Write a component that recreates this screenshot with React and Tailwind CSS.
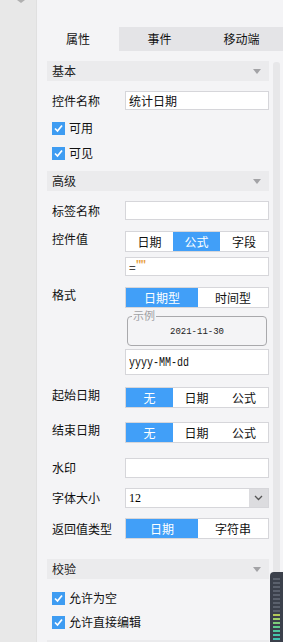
import React from "react";

const F = { fontFamily: '"Noto Sans CJK SC", "Noto Sans", sans-serif' };

function Header({ title, className = "" }) {
  return (
    <div className={"h-[20px] bg-[#ebebed] flex items-center justify-between pl-[5px] pr-[8px] text-[12px] text-[#222] " + className}>
      <span>{title}</span>
      <span className="w-0 h-0 border-l-[4px] border-r-[4px] border-t-[5px] border-l-transparent border-r-transparent border-t-[#a3a3a6]" />
    </div>
  );
}

function Check({ label, className = "" }) {
  return (
    <div className={"flex items-center h-[16px] pl-[5px] text-[12px] text-[#111] " + className}>
      <span className="w-[13px] h-[13px] bg-[#3e9cf2] flex items-center justify-center mr-[4px]">
        <svg width="11" height="11" viewBox="0 0 11 11"><path d="M2 5.5 L4.5 8 L9 2.5" stroke="#fff" strokeWidth="1.7" fill="none" /></svg>
      </span>
      <span>{label}</span>
    </div>
  );
}

function Row({ label, children, className = "", align = "items-center" }) {
  return (
    <div className={"flex " + align + " " + className}>
      <div className="w-[78px] pl-[5px] text-[12px] text-[#111] shrink-0 leading-[16px]">{label}</div>
      <div className="flex-1">{children}</div>
    </div>
  );
}

function Input({ h = "h-[19px]", children, className = "" }) {
  return <div className={"bg-white border border-[#d6d6da] flex items-center px-[3px] text-[12px] text-[#111] " + h + " " + className}>{children}</div>;
}

function Seg({ items, active, widths }) {
  return (
    <div className="flex h-[21px] border border-[#d6d6da] bg-white text-[12px]">
      {items.map((it, i) => (
        <div
          key={it}
          className={"flex items-center justify-center " + (i === active ? "bg-[#419ff8] text-white" : "bg-white text-[#111]")}
          style={{ width: widths[i] }}
        >
          {it}
        </div>
      ))}
    </div>
  );
}

export default function App() {
  return (
    <div className="w-[283px] h-[642px] flex overflow-hidden bg-[#f4f4f6]" style={F}>
      <div className="w-[37px] shrink-0 bg-[#e8e8e8] border-r border-[#e0e0e0] relative">
        <span className="absolute left-[17px] top-0 w-0 h-0 border-l-[4px] border-r-[4px] border-t-[3px] border-l-transparent border-r-transparent border-t-[#b0b0b0]" />
      </div>
      <div className="flex-1 flex flex-col relative">
        <div className="h-[27px] shrink-0" />
        <div className="h-[24px] flex bg-[#e4e4e7] text-[12px] text-[#111] shrink-0">
          <div className="w-[82px] bg-[#f4f4f6] flex items-center justify-center">属性</div>
          <div className="w-[81px] flex items-center justify-center">事件</div>
          <div className="flex-1 flex items-center justify-center">移动端</div>
        </div>
        <div className="flex">
          <div className="ml-[10px] w-[222px] flex flex-col">
            <Header title="基本" className="mt-[10px]" />
            <Row label="控件名称" className="mt-[10px]">
              <Input>统计日期</Input>
            </Row>
            <Check label="可用" className="mt-[10px]" />
            <Check label="可见" className="mt-[9px]" />
            <Header title="高级" className="mt-[10px]" />
            <Row label="标签名称" className="mt-[10px]">
              <Input />
            </Row>
            <Row label="控件值" className="mt-[11px]" align="items-start">
              <Seg items={["日期", "公式", "字段"]} active={1} widths={[47, 47, 48]} />
              <Input className="mt-[5px] leading-none">
                <span className="text-[12px]">=</span>
                <span className="text-[#e8a040] text-[10px] -mt-[6px] font-bold tracking-[-1px]">""</span>
              </Input>
            </Row>
            <Row label="格式" className="mt-[11px]" align="items-start">
              <Seg items={["日期型", "时间型"]} active={0} widths={[72, 70]} />
              <div className="mt-[8px] mx-[2px] h-[30px] border border-[#a9a9ac] rounded-[4px] relative flex items-center justify-center">
                <span className="absolute -top-[9px] left-[4px] bg-[#f4f4f6] px-[1px] text-[11px] text-[#a0a0a4] leading-[14px]">示例</span>
                <span className="text-[9px] text-[#222] mt-[4px]" style={{ fontFamily: '"Liberation Mono", monospace' }}>2021-11-30</span>
              </div>
              <Input h="h-[26px]" className="mt-[3px]">
                <span style={{ fontFamily: '"Liberation Mono", monospace' }} className="text-[10px] scale-y-125">yyyy-MM-dd</span>
              </Input>
            </Row>
            <Row label="起始日期" className="mt-[12px]" align="items-start">
              <Seg items={["无", "日期", "公式"]} active={0} widths={[47, 47, 48]} />
            </Row>
            <Row label="结束日期" className="mt-[14px]" align="items-start">
              <Seg items={["无", "日期", "公式"]} active={0} widths={[47, 47, 48]} />
            </Row>
            <Row label="水印" className="mt-[15px]">
              <Input h="h-[20px]" />
            </Row>
            <Row label="字体大小" className="mt-[10px]">
              <div className="h-[20px] bg-white border border-[#d6d6da] flex items-center">
                <span className="flex-1 pl-[3px] text-[12px]" style={{ fontFamily: '"Liberation Serif", serif' }}>12</span>
                <span className="w-[19px] h-full bg-[#dcdcdf] flex items-center justify-center">
                  <svg width="9" height="6" viewBox="0 0 9 6"><path d="M1 1 L4.5 4.5 L8 1" stroke="#555" strokeWidth="1.3" fill="none" /></svg>
                </span>
              </div>
            </Row>
            <Row label="返回值类型" className="mt-[10px]">
              <Seg items={["日期", "字符串"]} active={0} widths={[72, 70]} />
            </Row>
            <Header title="校验" className="mt-[20px]" />
            <Check label="允许为空" className="mt-[11px]" />
            <Check label="允许直接编辑" className="mt-[8px]" />
            <div className="h-[20px] bg-[#ebebed] mt-[10px]" />
          </div>
          <div className="ml-[4px] mt-[11px] w-[7px] h-[600px] bg-[#e7e7e9] rounded-t-[3px]" />
        </div>
        <div className="absolute right-0 top-[572px] w-[13px] h-[70px] bg-[#3b404b] rounded-tl-[4px] flex flex-col items-center pt-[6px] gap-[2px]">
          {["#5a606c", "#5a606c", "#5a606c", "#5a606c", "#5a606c", "#5a606c", "#5a606c", "#5a606c", "#5a606c", "#b5c95a", "#9fd06a", "#7fd07a", "#5fce8e", "#4fc9a0", "#45c6aa", "#40c2b0"].map((c, i) => (
            <span key={i} className="w-[7px] h-[2px]" style={{ background: c }} />
          ))}
        </div>
      </div>
    </div>
  );
}
